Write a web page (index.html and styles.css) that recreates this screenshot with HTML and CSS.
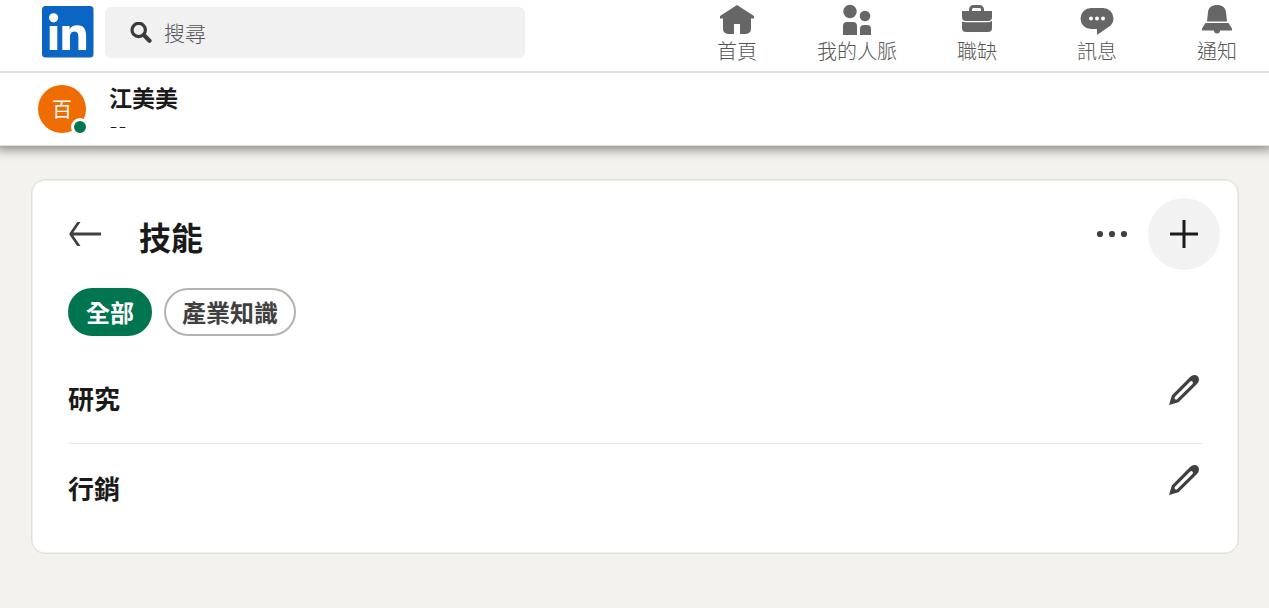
FILE: index.html
```html
<!DOCTYPE html>
<html lang="zh-Hant">
<head>
<meta charset="utf-8">
<meta name="viewport" content="width=device-width, initial-scale=1">
<title>技能 | LinkedIn</title>
<link rel="stylesheet" href="styles.css">
</head>
<body>
<header class="topbar">
  <a class="logo" href="#" aria-label="LinkedIn">
    <svg viewBox="0 0 52 52" width="52" height="52" aria-hidden="true">
      <rect width="51.500" height="51.500" rx="3.500" fill="#0a66c2"/>
      <circle cx="11.600" cy="11.800" r="4.600" fill="#fff"/>
      <rect x="7.700" y="20" width="7.600" height="24" fill="#fff"/>
      <path d="M20.300 20h7.300v3.300c1.400-2.500 4.200-4 7.500-4 7.400 0 9 4.800 9 11V44h-7.700V31.800c0-3-.2-6.300-3.900-6.300-3.700 0-4.500 3-4.500 6.100V44h-7.700z" fill="#fff"/>
    </svg>
  </a>
  <form class="search" role="search">
    <label class="search-icon" for="q" aria-label="搜尋">
      <svg viewBox="0 0 22 22" width="22" height="22" aria-hidden="true">
        <circle cx="8.700" cy="8" r="6.700" fill="none" stroke="#3b3b3b" stroke-width="3.200"/>
        <path d="M13.800 13l5.700 5.700" stroke="#3b3b3b" stroke-width="4.200" stroke-linecap="round"/>
      </svg>
    </label>
    <input class="search-input" id="q" type="text" placeholder="搜尋">
  </form>
  <nav class="nav">
    <a class="nav-item" href="#">
      <svg class="nav-icon" viewBox="0 0 36 32" width="36" height="32" aria-hidden="true"><path d="M18 1L35 12v2.500h-3V25a5 5 0 0 1-5 5h-6V20h-6v10H9a5 5 0 0 1-5-5V14.500H1V12z"/></svg>
      <span>首頁</span>
    </a>
    <a class="nav-item" href="#">
      <svg class="nav-icon" viewBox="0 0 36 32" width="36" height="32" aria-hidden="true"><circle cx="11" cy="7.500" r="6.700"/><circle cx="26" cy="12" r="5.300"/><path d="M4 31V22a4 4 0 0 1 4-4h6a4 4 0 0 1 4 4v9zM21 31v-6a4 4 0 0 1 4-4h3a4 4 0 0 1 4 4v6z"/></svg>
      <span>我的人脈</span>
    </a>
    <a class="nav-item" href="#">
      <svg class="nav-icon" viewBox="0 0 36 32" width="36" height="32" aria-hidden="true"><path d="M3 7h7V5.500A4.500 4.500 0 0 1 14.500 1h6A4.500 4.500 0 0 1 25 5.500V7h8v6a4 4 0 0 1-4 4H7a4 4 0 0 1-4-4zM13 7h9V5.500A1.500 1.500 0 0 0 20.500 4h-6A1.500 1.500 0 0 0 13 5.500zM3 17.500Q5 18.200 7 18.200h22q2 0 4-1.500V24a4 4 0 0 1-4 4H7a4 4 0 0 1-4-4z" fill-rule="evenodd"/></svg>
      <span>職缺</span>
    </a>
    <a class="nav-item" href="#">
      <svg class="nav-icon" viewBox="0 0 36 32" width="36" height="32" aria-hidden="true"><path d="M12 4h12a10.500 10.500 0 0 1 10.500 10.500c0 4-2 6.500-5 8.500L18 31v-6h-6A10.500 10.500 0 0 1 12 4z"/><g fill="#fff"><circle cx="12" cy="14.500" r="2"/><circle cx="18" cy="14.500" r="2"/><circle cx="24" cy="14.500" r="2"/></g></svg>
      <span>訊息</span>
    </a>
    <a class="nav-item" href="#">
      <svg class="nav-icon" viewBox="0 0 36 32" width="36" height="32" aria-hidden="true"><path d="M8 17.500l1-9.500c.5-4.500 4-7 9-7s8.500 2.500 9 7l1 9.500zM6.500 19h23l3.500 5.500v2H21a3 3 0 1 1-6 0H3v-2z"/></svg>
      <span>通知</span>
    </a>
  </nav>
</header>

<section class="profile">
  <div class="avatar">百<span class="presence"></span></div>
  <div class="profile-text">
    <a class="profile-name" href="#">江美美</a>
    <p class="profile-headline">--</p>
  </div>
</section>

<main class="page">
  <section class="card">
    <div class="card-head">
      <button class="icon-button back" type="button" aria-label="返回">
        <svg viewBox="0 0 34 28" width="34" height="28" aria-hidden="true"><path d="M33 12.500v3H5.300L12.500 26H9.200L1.500 14.800v-1.600L9.200 2h3.300L5.300 12.500z" fill="#404040"/></svg>
      </button>
      <h1 class="title">技能</h1>
      <button class="icon-button" type="button" aria-label="更多">
        <svg viewBox="0 0 32 8" width="32" height="8" fill="#404040" aria-hidden="true"><circle cx="4" cy="4" r="3.100"/><circle cx="16" cy="4" r="3.100"/><circle cx="28" cy="4" r="3.100"/></svg>
      </button>
      <button class="icon-button add" type="button" aria-label="新增">
        <svg viewBox="0 0 28 28" width="28" height="28" aria-hidden="true"><path d="M14 0v28M0 14h28" stroke="#1a1a1a" stroke-width="3"/></svg>
      </button>
    </div>
    <div class="chips">
      <button class="chip chip-active" type="button" aria-pressed="true">全部</button>
      <button class="chip" type="button" aria-pressed="false">產業知識</button>
    </div>
    <ul class="skills">
      <li class="skill">
        <h2 class="skill-name">研究</h2>
        <button class="icon-button" type="button" aria-label="編輯研究">
          <svg viewBox="0 0 32 32" width="32" height="32" aria-hidden="true"><path d="M1 31L3.800 21.500 22 3Q24 1 26.500 1A4.500 4.500 0 0 1 31 5.500Q31 8 29 10L10.500 28.200zM7 22.800a1.500 1.500 0 0 0 2.300 2.300L24.500 10a1.500 1.500 0 0 0-2.500-2.300z" fill="#404040" fill-rule="evenodd"/></svg>
        </button>
      </li>
      <li class="skill">
        <h2 class="skill-name">行銷</h2>
        <button class="icon-button" type="button" aria-label="編輯行銷">
          <svg viewBox="0 0 32 32" width="32" height="32" aria-hidden="true"><path d="M1 31L3.800 21.500 22 3Q24 1 26.500 1A4.500 4.500 0 0 1 31 5.500Q31 8 29 10L10.500 28.200zM7 22.800a1.500 1.500 0 0 0 2.300 2.300L24.500 10a1.500 1.500 0 0 0-2.500-2.300z" fill="#404040" fill-rule="evenodd"/></svg>
        </button>
      </li>
    </ul>
  </section>
</main>
</body>
</html>
```

FILE: styles.css
```css
* {
  box-sizing: border-box;
}

body {
  margin: 0;
  background: #f3f2ee;
  color: #1a1a1a;
  font-family: "Noto Sans CJK TC", sans-serif;
}

a {
  color: inherit;
  text-decoration: none;
}

button {
  border: 0;
  padding: 0;
  background: none;
  font: inherit;
  cursor: pointer;
}

svg {
  display: block;
}

.topbar {
  position: relative;
  z-index: 1;
  display: flex;
  align-items: flex-start;
  padding: 4px 12px 5px 42px;
  background: #fff;
  border-bottom: 2px solid #dfdfdf;
}

.logo {
  padding-top: 2px;
}

.search {
  display: flex;
  align-items: center;
  flex: 0 1 420px;
  height: 51px;
  margin: 3px 24px 0 11px;
  padding: 0 24px 0 25px;
  border-radius: 6px;
  background: #f1f1f1;
}

.search-input {
  flex: 1;
  min-width: 0;
  margin-left: 12px;
  padding: 0 0 2px;
  border: 0;
  outline: 0;
  background: none;
  color: #1a1a1a;
  font: 300 21px/32px "Noto Sans CJK TC", sans-serif;
}

.search-input::placeholder {
  color: #555;
  opacity: 1;
}

.nav {
  display: flex;
  gap: 40px;
  margin-left: auto;
}

.nav-item {
  display: flex;
  flex-direction: column;
  align-items: center;
  width: 80px;
  color: #555;
  font-size: 20px;
  font-weight: 300;
  line-height: 30px;
  white-space: nowrap;
}

.nav-icon {
  fill: #666;
}

.profile {
  display: flex;
  align-items: center;
  gap: 23px;
  height: 73px;
  padding: 0 38px;
  background: #fff;
  border-bottom: 1px solid #dededc;
  box-shadow: 0 0 10px 4px rgba(0, 0, 0, 0.42);
}

.avatar {
  position: relative;
  width: 48px;
  height: 48px;
  border-radius: 50%;
  background: #ef6c00;
  color: #fff;
  font-size: 20px;
  line-height: 48px;
  text-align: center;
}

.presence {
  position: absolute;
  right: -3px;
  bottom: -3px;
  width: 18px;
  height: 18px;
  border: 3px solid #fff;
  border-radius: 50%;
  background: #01754f;
}

.profile-name {
  display: block;
  font-size: 23px;
  font-weight: 700;
  line-height: 33px;
}

.profile-headline {
  margin: 0;
  font-family: Lato, sans-serif;
  font-size: 24px;
  font-weight: 300;
  line-height: 24px;
}

.page {
  padding: 33px 30px 54px 31px;
}

.card {
  padding: 18px 18px 20px 36px;
  border: 1px solid #e0dfdc;
  border-radius: 14px;
  background: #fff;
  box-shadow: inset 0 0 0 1px #f0efed;
}

.card-head {
  display: flex;
  align-items: center;
}

.title {
  flex: 1;
  margin: 4px 0 0 37px;
  font-size: 32px;
  font-weight: 700;
  line-height: 40px;
}

.add {
  display: grid;
  place-items: center;
  width: 72px;
  height: 72px;
  margin-left: 20px;
  border-radius: 50%;
  background: #f2f2f2;
}

.chips {
  display: flex;
  gap: 12px;
  margin-top: 18px;
}

.chip {
  height: 48px;
  padding: 0 16px;
  border: 2px solid #b2b2b2;
  border-radius: 24px;
  color: #404040;
  font-size: 24px;
  font-weight: 700;
  line-height: 44px;
}

.chip-active {
  border-color: #01754f;
  background: #01754f;
  color: #fff;
}

.skills {
  margin: 18px 18px 0 0;
  padding: 0;
  list-style: none;
}

.skill {
  display: flex;
  align-items: flex-start;
  justify-content: space-between;
  padding: 20px 2px 25px 0;
}

.skill + .skill {
  border-top: 1px solid #e8e8e8;
}

.skill-name {
  margin: 4px 0 0;
  font-size: 26px;
  font-weight: 700;
  line-height: 40px;
}
```
